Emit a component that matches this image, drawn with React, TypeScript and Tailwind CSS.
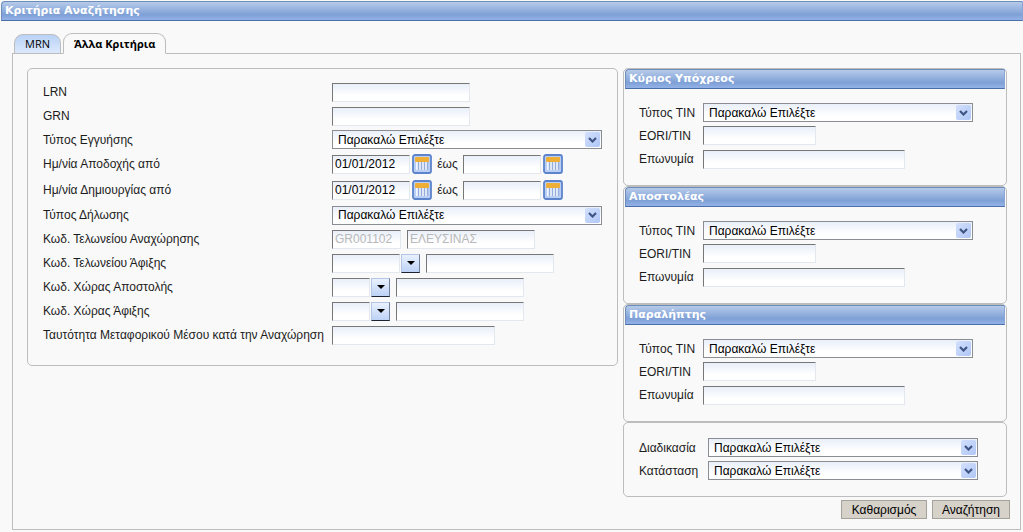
import React, { useState } from 'react';
import clsx from 'clsx';

const PLACEHOLDER = 'Παρακαλώ Επιλέξτε';

interface FieldProps {
  id: string;
  label: string;
  labelClass: string;
  rowClass?: string;
  children: React.ReactNode;
}

function Field({ id, label, labelClass, rowClass = 'h-6', children }: FieldProps) {
  return (
    <div className={clsx('flex items-center', rowClass)}>
      <label htmlFor={id} className={clsx('shrink-0 whitespace-nowrap', labelClass)}>
        {label}
      </label>
      {children}
    </div>
  );
}

function TextInput({ className, ...props }: React.InputHTMLAttributes<HTMLInputElement>) {
  return (
    <input
      type="text"
      className={clsx(
        'h-[19px] shrink-0 border border-t-[#777777] border-l-[#777777] border-r-[#e3e7ee] border-b-[#e3e7ee] bg-linear-to-b from-[#e9eff9] to-white to-70% px-[2px] text-black disabled:text-[#b8b8b8]',
        className
      )}
      {...props}
    />
  );
}

function SelectBox({ id }: { id: string }) {
  return (
    <div className="relative h-[19px] w-[270px] shrink-0">
      <select
        id={id}
        className="block h-full w-full appearance-none border border-[#8a8d92] bg-linear-to-b from-[#e9eff9] to-white to-70% pr-5 pl-[5px] text-black"
      >
        <option>{PLACEHOLDER}</option>
      </select>
      <span className="pointer-events-none absolute top-[2px] right-[2px] flex h-[15px] w-[15px] items-center justify-center rounded-xs bg-linear-to-br from-[#d3e0fd] to-[#afc6f5]">
        <svg width="9" height="6" viewBox="0 0 9 6" fill="none" stroke="#3f5684" strokeWidth="2.2">
          <path d="M1 1 L4.5 4.5 L8 1" />
        </svg>
      </span>
    </div>
  );
}

function CalendarButton({ label }: { label: string }) {
  return (
    <button type="button" aria-label={label} className="ml-[2px] h-5 w-5 shrink-0">
      <svg width="20" height="20" viewBox="0 0 20 20">
        <rect x="1" y="1" width="18" height="18" rx="2" fill="#b9cff5" stroke="#5c83cb" strokeWidth="1.8" />
        <rect x="4" y="7" width="12" height="9" fill="#f3f7ff" />
        <rect x="3" y="3" width="14" height="5" rx="1" fill="#efae35" />
        <path d="M6.5 8v8M9.5 8v8M12.5 8v8M15.5 8v8" stroke="#94add9" strokeWidth="1.4" />
      </svg>
    </button>
  );
}

function LookupButton({ label }: { label: string }) {
  return (
    <button
      type="button"
      aria-label={label}
      className="mr-[6px] ml-px flex h-[19px] w-[19px] shrink-0 items-center justify-center border border-[#b4c6e6] border-r-[#6f7f9c] border-b-[#1c2433] bg-linear-to-b from-[#e9f1fe] to-[#bdd2f5]"
    >
      <svg width="8" height="4" viewBox="0 0 8 4">
        <path d="M0 0h8L4 4z" fill="#000" />
      </svg>
    </button>
  );
}

function DateRange({ id, name }: { id: string; name: string }) {
  return (
    <>
      <TextInput id={id} className="w-[78px]" defaultValue="01/01/2012" />
      <CalendarButton label={`${name} από`} />
      <label htmlFor={`${id}-to`} className="w-[31px] shrink-0 text-center">
        έως
      </label>
      <TextInput id={`${id}-to`} className="w-[78px]" />
      <CalendarButton label={`${name} έως`} />
    </>
  );
}

function TitleBar({ children }: { children: React.ReactNode }) {
  return (
    <h2 className="flex h-5 items-center rounded-tl-[4px] border border-t-[#6c8cba] border-l-[#6c8cba] border-r-[#8aa6d6] border-b-[#4a6ea9] bg-linear-to-b from-[#b7cbe9] via-[#7fa0d6] via-70% to-[#93b2e8] px-[3px] font-['DejaVu_Sans',sans-serif] text-[11px] leading-4 font-bold text-white">
      {children}
    </h2>
  );
}

const SIDE_LABEL = 'w-[64px]';

function PartyPanel({ id, title }: { id: string; title: string }) {
  return (
    <section className="rounded-[5px] border border-[#bdbdbd] px-px">
      <TitleBar>{title}</TitleBar>
      <div className="px-[14px] pt-3 pb-[14px]">
        <Field id={`${id}-type`} label="Τύπος TIN" labelClass={SIDE_LABEL} rowClass="h-[23px]">
          <SelectBox id={`${id}-type`} />
        </Field>
        <Field id={`${id}-tin`} label="EORI/TIN" labelClass={SIDE_LABEL} rowClass="h-[23px]">
          <TextInput id={`${id}-tin`} className="w-[113px]" />
        </Field>
        <Field id={`${id}-name`} label="Επωνυμία" labelClass={SIDE_LABEL}>
          <TextInput id={`${id}-name`} className="w-[202px]" />
        </Field>
      </div>
    </section>
  );
}

const parties = [
  { id: 'principal', title: 'Κύριος Υπόχρεος' },
  { id: 'consignor', title: 'Αποστολέας' },
  { id: 'consignee', title: 'Παραλήπτης' }
];

const MAIN_LABEL = 'w-[289px]';

function GeneralCriteria() {
  return (
    <section className="min-w-[591px] flex-1 rounded-[5px] border border-[#bdbdbd] pt-[11px] pr-[15px] pb-[18px] pl-[15px]">
      <Field id="lrn" label="LRN" labelClass={MAIN_LABEL}>
        <TextInput id="lrn" className="w-[138px]" />
      </Field>
      <Field id="grn" label="GRN" labelClass={MAIN_LABEL}>
        <TextInput id="grn" className="w-[138px]" />
      </Field>
      <Field id="guarantee" label="Τύπος Εγγυήσης" labelClass={MAIN_LABEL} rowClass="h-[23px]">
        <SelectBox id="guarantee" />
      </Field>
      <Field id="accepted" label="Ημ/νία Αποδοχής από" labelClass={MAIN_LABEL} rowClass="h-[26px]">
        <DateRange id="accepted" name="Ημ/νία Αποδοχής" />
      </Field>
      <Field id="created" label="Ημ/νία Δημιουργίας από" labelClass={MAIN_LABEL} rowClass="h-[26px]">
        <DateRange id="created" name="Ημ/νία Δημιουργίας" />
      </Field>
      <Field id="declaration" label="Τύπος Δήλωσης" labelClass={MAIN_LABEL}>
        <SelectBox id="declaration" />
      </Field>
      <Field id="departure" label="Κωδ. Τελωνείου Αναχώρησης" labelClass={MAIN_LABEL}>
        <TextInput id="departure" className="mr-[6px] w-[69px]" defaultValue="GR001102" disabled />
        <TextInput aria-label="Τελωνείο Αναχώρησης" className="w-[128px]" defaultValue="ΕΛΕΥΣΙΝΑΣ" disabled />
      </Field>
      <Field id="destination" label="Κωδ. Τελωνείου Άφιξης" labelClass={MAIN_LABEL}>
        <TextInput id="destination" className="w-[68px]" />
        <LookupButton label="Επιλογή Τελωνείου Άφιξης" />
        <TextInput aria-label="Τελωνείο Άφιξης" className="w-[128px]" />
      </Field>
      <Field id="from-country" label="Κωδ. Χώρας Αποστολής" labelClass={MAIN_LABEL}>
        <TextInput id="from-country" className="w-[38px]" />
        <LookupButton label="Επιλογή Χώρας Αποστολής" />
        <TextInput aria-label="Χώρα Αποστολής" className="w-[128px]" />
      </Field>
      <Field id="to-country" label="Κωδ. Χώρας Άφιξης" labelClass={MAIN_LABEL}>
        <TextInput id="to-country" className="w-[38px]" />
        <LookupButton label="Επιλογή Χώρας Άφιξης" />
        <TextInput aria-label="Χώρα Άφιξης" className="w-[128px]" />
      </Field>
      <Field id="transport" label="Ταυτότητα Μεταφορικού Μέσου κατά την Αναχώρηση" labelClass={MAIN_LABEL}>
        <TextInput id="transport" className="w-[163px]" />
      </Field>
    </section>
  );
}

const tabs = ['MRN', 'Άλλα Κριτήρια'];

export default function App() {
  const [activeTab, setActiveTab] = useState(1);

  return (
    <main className="min-h-screen bg-[#f9f9f9] pt-px pl-px font-['Liberation_Sans',Arial,sans-serif] text-[12px] leading-4 text-[#1c1c1c]">
      <TitleBar>Κριτήρια Αναζήτησης</TitleBar>

      <div className="pt-3 pr-[2px] pl-[11px]">
        {/* Tabs overlap the frame's top border by one pixel */}
        <div role="tablist" className="-mb-px flex items-end gap-[2px] pl-[2px] font-['Open_Sans',sans-serif] text-[11px] text-black">
          {tabs.map((tab, index) => (
            <button
              key={tab}
              type="button"
              role="tab"
              aria-selected={activeTab === index}
              onClick={() => setActiveTab(index)}
              className={clsx(
                'rounded-t-[9px] border px-[10px] whitespace-nowrap',
                activeTab === index
                  ? 'h-[21px] border-[#bdbdbd] border-b-[#f9f9f9] bg-[#f9f9f9] font-bold'
                  : 'h-5 border-[#bdbdbd] bg-linear-to-b from-[#b9d2f6] to-[#dce9fc]'
              )}
            >
              {tab}
            </button>
          ))}
        </div>

        <form className="border border-[#bdbdbd] pt-[14px] pr-[10px] pb-[10px] pl-[14px]" onSubmit={(e) => e.preventDefault()}>
          <div className="flex items-start gap-[5px] pr-1">
            <GeneralCriteria />

            <div className="w-[384px] shrink-0">
              {parties.map((party) => (
                <PartyPanel key={party.id} id={party.id} title={party.title} />
              ))}
              <section className="rounded-[5px] border border-[#bdbdbd] px-[15px] pt-[13px] pb-[14px]">
                <Field id="procedure" label="Διαδικασία" labelClass="w-[69px]" rowClass="h-[23px]">
                  <SelectBox id="procedure" />
                </Field>
                <Field id="status" label="Κατάσταση" labelClass="w-[69px]" rowClass="h-[23px]">
                  <SelectBox id="status" />
                </Field>
              </section>
            </div>
          </div>

          <div className="mt-[3px] flex justify-end gap-[5px]">
            <button type="reset" className="h-[19px] w-[86px] border border-[#a5a29b] bg-[#d6d1c9] text-black">
              Καθαρισμός
            </button>
            <button type="submit" className="h-[19px] w-[78px] border border-[#a5a29b] bg-[#d6d1c9] text-black">
              Αναζήτηση
            </button>
          </div>
        </form>
      </div>
    </main>
  );
}
